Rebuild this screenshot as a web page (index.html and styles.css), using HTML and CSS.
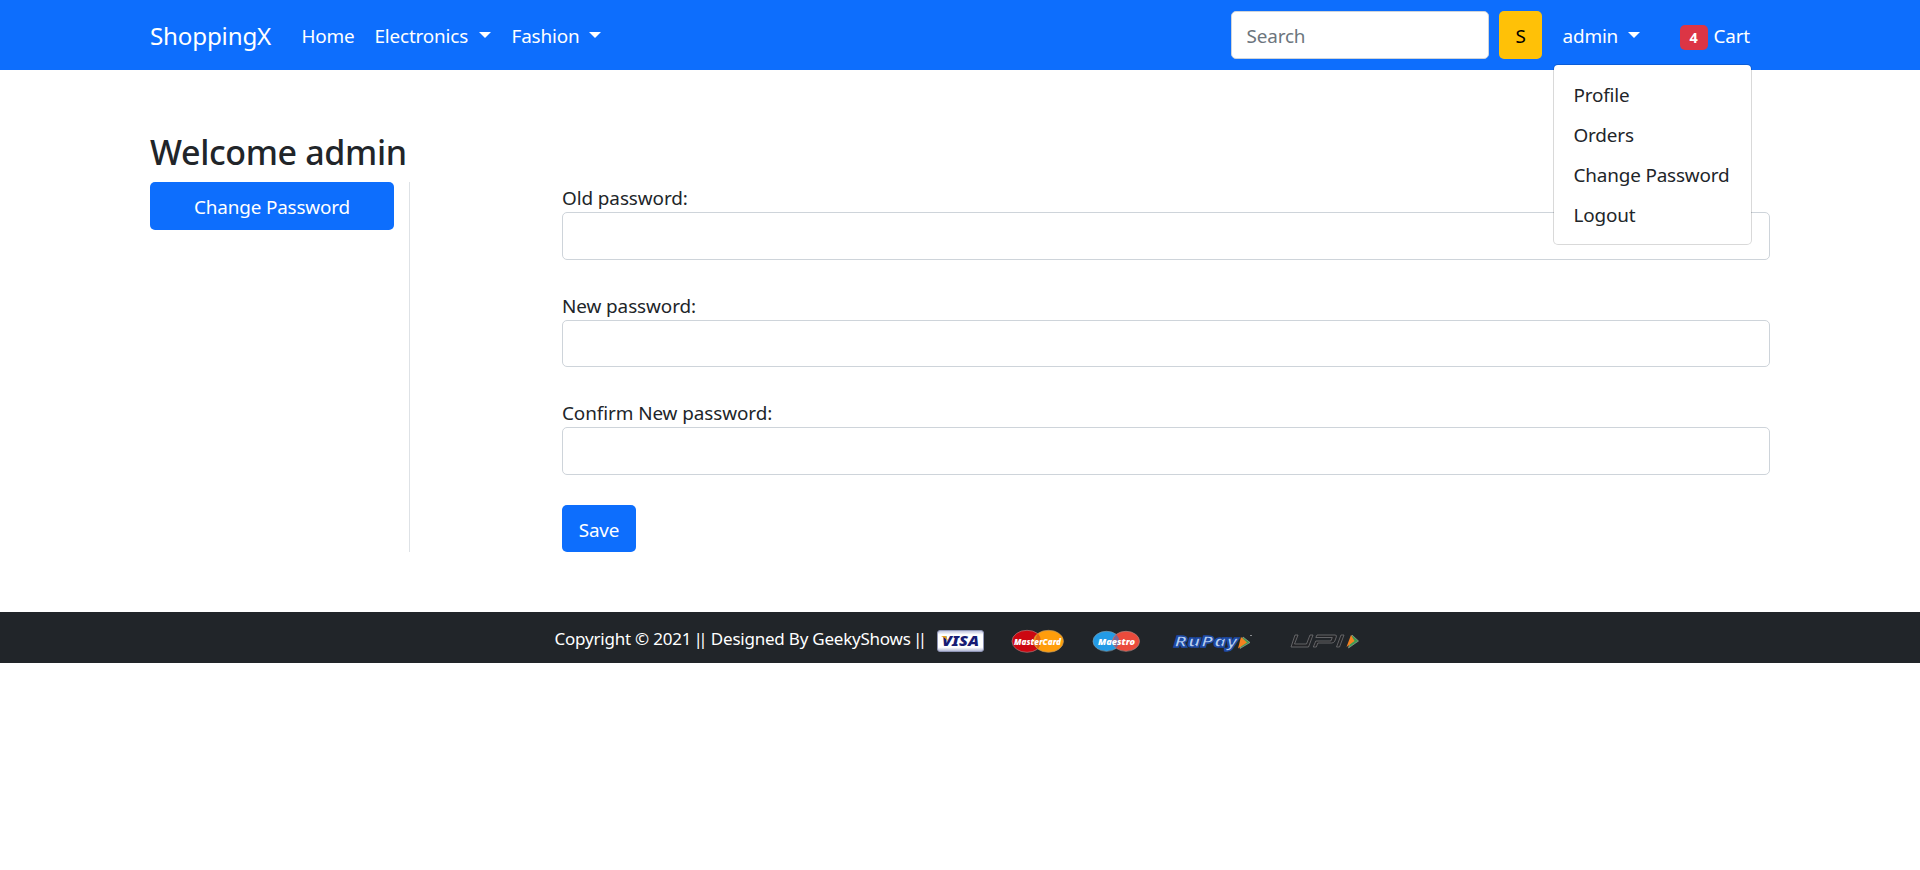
FILE: index.html
```html
<!DOCTYPE html>
<html lang="en">
<head>
<meta charset="utf-8">
<title>ShoppingX</title>
<link rel="stylesheet" href="styles.css">
</head>
<body>
<nav class="navbar">
  <div class="container nav-inner">
    <a class="brand">ShoppingX</a>
    <div class="nav-links">
      <a class="nav-link w-home">Home</a>
      <a class="nav-link w-electronics">Electronics<i class="caret"></i></a>
      <a class="nav-link w-fashion">Fashion<i class="caret"></i></a>
    </div>
    <form class="search">
      <input class="control search-input" type="text" placeholder="Search">
      <button class="btn btn-warning" type="button">S</button>
    </form>
    <div class="account">
      <a class="nav-link w-admin">admin<i class="caret"></i></a>
      <div class="menu">
        <a class="menu-item">Profile</a>
        <a class="menu-item">Orders</a>
        <a class="menu-item">Change Password</a>
        <a class="menu-item">Logout</a>
      </div>
    </div>
    <a class="cart"><span class="badge">4</span><span class="cart-text">Cart</span></a>
  </div>
</nav>
<main class="container page">
  <h3 class="title">Welcome admin</h3>
  <div class="row">
    <aside class="side"><a class="btn btn-primary btn-block">Change Password</a></aside>
    <form class="form">
      <div class="field"><label class="label">Old password:</label><input class="control" type="password"></div>
      <div class="field"><label class="label">New password:</label><input class="control" type="password"></div>
      <div class="field"><label class="label">Confirm New password:</label><input class="control" type="password"></div>
      <button class="btn btn-primary btn-save" type="button">Save</button>
    </form>
  </div>
</main>
<footer class="footer">
  <span class="copy">Copyright © 2021 <span class="bars">||</span> Designed By GeekyShows <span class="bars">||</span></span>
  <svg class="cards" width="440" height="36" viewBox="930 620 440 36">
    <defs>
      <linearGradient id="visa" x1="0" y1="0" x2="0" y2="1"><stop offset="0" stop-color="#b9bedb"/><stop offset=".2" stop-color="#fff"/><stop offset=".8" stop-color="#fff"/><stop offset="1" stop-color="#a9afd0"/></linearGradient>
    </defs>
    <rect x="937.5" y="630.5" width="46" height="21" rx="2.5" fill="url(#visa)" stroke="#8f95b5"/>
    <text x="942" y="646" class="logo visa" textLength="37" lengthAdjust="spacingAndGlyphs">VISA</text>
    <path d="M941 636h5l2 5q-2-3-7-5z" fill="#e8a11c"/>
    <ellipse cx="1027" cy="641.3" rx="15" ry="11" fill="#cc0711" stroke="#a77b7d" stroke-width=".7"/>
    <ellipse cx="1048.500" cy="641.3" rx="15" ry="11" fill="#ff9d0b" stroke="#b8945d" stroke-width=".7"/>
    <path d="M1038 633.500q-6 8 0 15.500q6-8 0-15.500z" fill="#e26313"/>
    <text x="1014" y="645" class="logo master" textLength="47" lengthAdjust="spacingAndGlyphs">MasterCard</text>
    <ellipse cx="1106.500" cy="641.3" rx="13.500" ry="10" fill="#239be6" stroke="#7b9cad" stroke-width=".7"/>
    <ellipse cx="1126" cy="641.3" rx="13.500" ry="10" fill="#eb4b3c" stroke="#ad8683" stroke-width=".7"/>
    <path d="M1116.300 634.500q-6 7 0 13.500q6-7 0-13.500z" fill="#79699b"/>
    <text x="1098" y="644.500" class="logo maestro" textLength="37" lengthAdjust="spacingAndGlyphs">Maestro</text>
    <text x="1174" y="646.500" class="logo rupay" textLength="64" lengthAdjust="spacingAndGlyphs">RuPay</text>
    <path d="M1243 637l7 5.500-10 6z" fill="#3e9c52" stroke="#a9aaa0" stroke-width=".6"/>
    <path d="M1241 637l6 5.500-9 6z" fill="#f58220"/>
    <rect x="1250" y="635" width="2" height="1" fill="#8a8d90"/>
    <path d="M1295 635h3l-3.500 9h12l3.500-9h3l-4.500 12h-17.500zM1317 635h18q2 0 1.300 2l-1.500 4q-1 2-3 2h-14l-1.500 4h-3l2.500-6h15l1.500-3.500h-16.500zM1341 635h3l-4.500 12h-3z" fill="#222326" stroke="#737476" stroke-width=".8"/>
    <path d="M1352 635l6.500 6-10 7z" fill="#3e9c52" stroke="#a9aaa0" stroke-width=".6"/>
    <path d="M1351 635l3.500 6-8 6z" fill="#f58220"/>
  </svg>
</footer>
</body>
</html>
```
FILE: styles.css
```css
* { box-sizing: border-box; }
body {
  margin: 0;
  background: #fff;
  color: #212529;
  font-family: "Noto Sans", "Open Sans", sans-serif;
  font-size: 18.9px;
  line-height: 30px;
  letter-spacing: -0.17px;
}
.container { width: 1650px; margin: 0 auto; padding: 0 15px; }
.navbar { height: 70px; background: #0d6efd; color: #fff; }
.nav-inner { display: flex; align-items: center; height: 70px; }
.brand { width: 141.500px; font-size: 24.200px; letter-spacing: -0.2px; white-space: nowrap; padding-top: 1px; }
.nav-links { display: flex; flex: 1; }
.nav-link { display: flex; align-items: center; padding: 2px 10px 0; white-space: nowrap; }
.w-home { width: 73px; }
.w-electronics { width: 136px; }
.w-fashion { width: 110px; }
.w-electronics, .w-fashion, .w-admin { justify-content: space-between; }
.w-fashion { margin-left: 1px; padding-right: 11px; }
.w-admin { padding-right: 11px; }
.caret { border: 6px solid transparent; border-top-color: #fff; border-bottom: 0; margin-top: -2px; }
.search { display: flex; gap: 10px; margin-right: 10.500px; }
.control {
  display: block;
  width: 100%;
  height: 47.500px;
  padding: 8px 14.500px 6px;
  border: 1px solid #ced4da;
  border-radius: 5px;
  background: #fff;
  font: inherit;
  letter-spacing: inherit;
}
.control::placeholder { color: #6c757d; opacity: 1; }
.search-input { width: 258px; }
.btn {
  display: block;
  height: 47.500px;
  padding: 0;
  border: 0;
  border-radius: 5px;
  font: inherit;
  letter-spacing: inherit;
  line-height: 51px;
  text-align: center;
}
.btn-warning { width: 43px; background: #ffc107; color: #000; }
.btn-primary { background: #0d6efd; color: #fff; }
.btn-block { width: 244px; }
.btn-save { width: 74px; }
.account { position: relative; width: 98px; }
.menu {
  position: absolute;
  top: 45px;
  left: 0;
  width: 199px;
  height: 181px;
  padding: 10px 0;
  background: #fff;
  background-clip: padding-box;
  border: 1px solid rgba(0, 0, 0, .15);
  border-radius: 5px;
  color: #212529;
}
.menu-item { display: block; height: 40px; padding: 5px 20px; white-space: nowrap; }
.cart { display: flex; align-items: center; gap: 6px; margin: 0 20px 0 29px; }
.cart-text { padding-top: 2px; }
.badge {
  width: 28px;
  height: 25px;
  margin-top: 4px;
  border-radius: 5px;
  background: #dc3545;
  font-size: 14.500px;
  font-weight: 700;
  line-height: 25px;
  text-align: center;
}
.page { padding-top: 60px; padding-bottom: 60px; }
.title { height: 42px; margin: 0 0 10px; padding-top: 1px; font-size: 34px; font-weight: 500; line-height: 43px; letter-spacing: -0.35px; }
.row { display: flex; height: 370px; }
.side { width: 260px; border-right: 1px solid #dee2e6; }
.form { flex: 1; margin-left: 152px; }
.field { margin-bottom: 30px; }
.label { display: block; height: 30px; padding-top: 1px; letter-spacing: -0.08px; }
.footer { display: flex; height: 51px; padding-left: 554.500px; background: #212529; color: #fff; }
.copy { width: 375.500px; padding-top: 12px; font-size: 17px; letter-spacing: -0.22px; white-space: nowrap; }
.bars { letter-spacing: -4.500px; margin-left: -2px; margin-right: 3.500px; }
.cards { margin-top: 8px; }
.logo { font-family: "Noto Sans", sans-serif; font-style: italic; font-weight: 900; letter-spacing: 0; }
.visa { fill: #171b74; font-size: 14px; }
.master { fill: #fff; font-size: 9.500px; }
.maestro { fill: #fff; font-size: 9.500px; }
.rupay { fill: #b9d2f2; stroke: #1d4ba5; stroke-width: 1.400px; font-size: 15px; }
```
